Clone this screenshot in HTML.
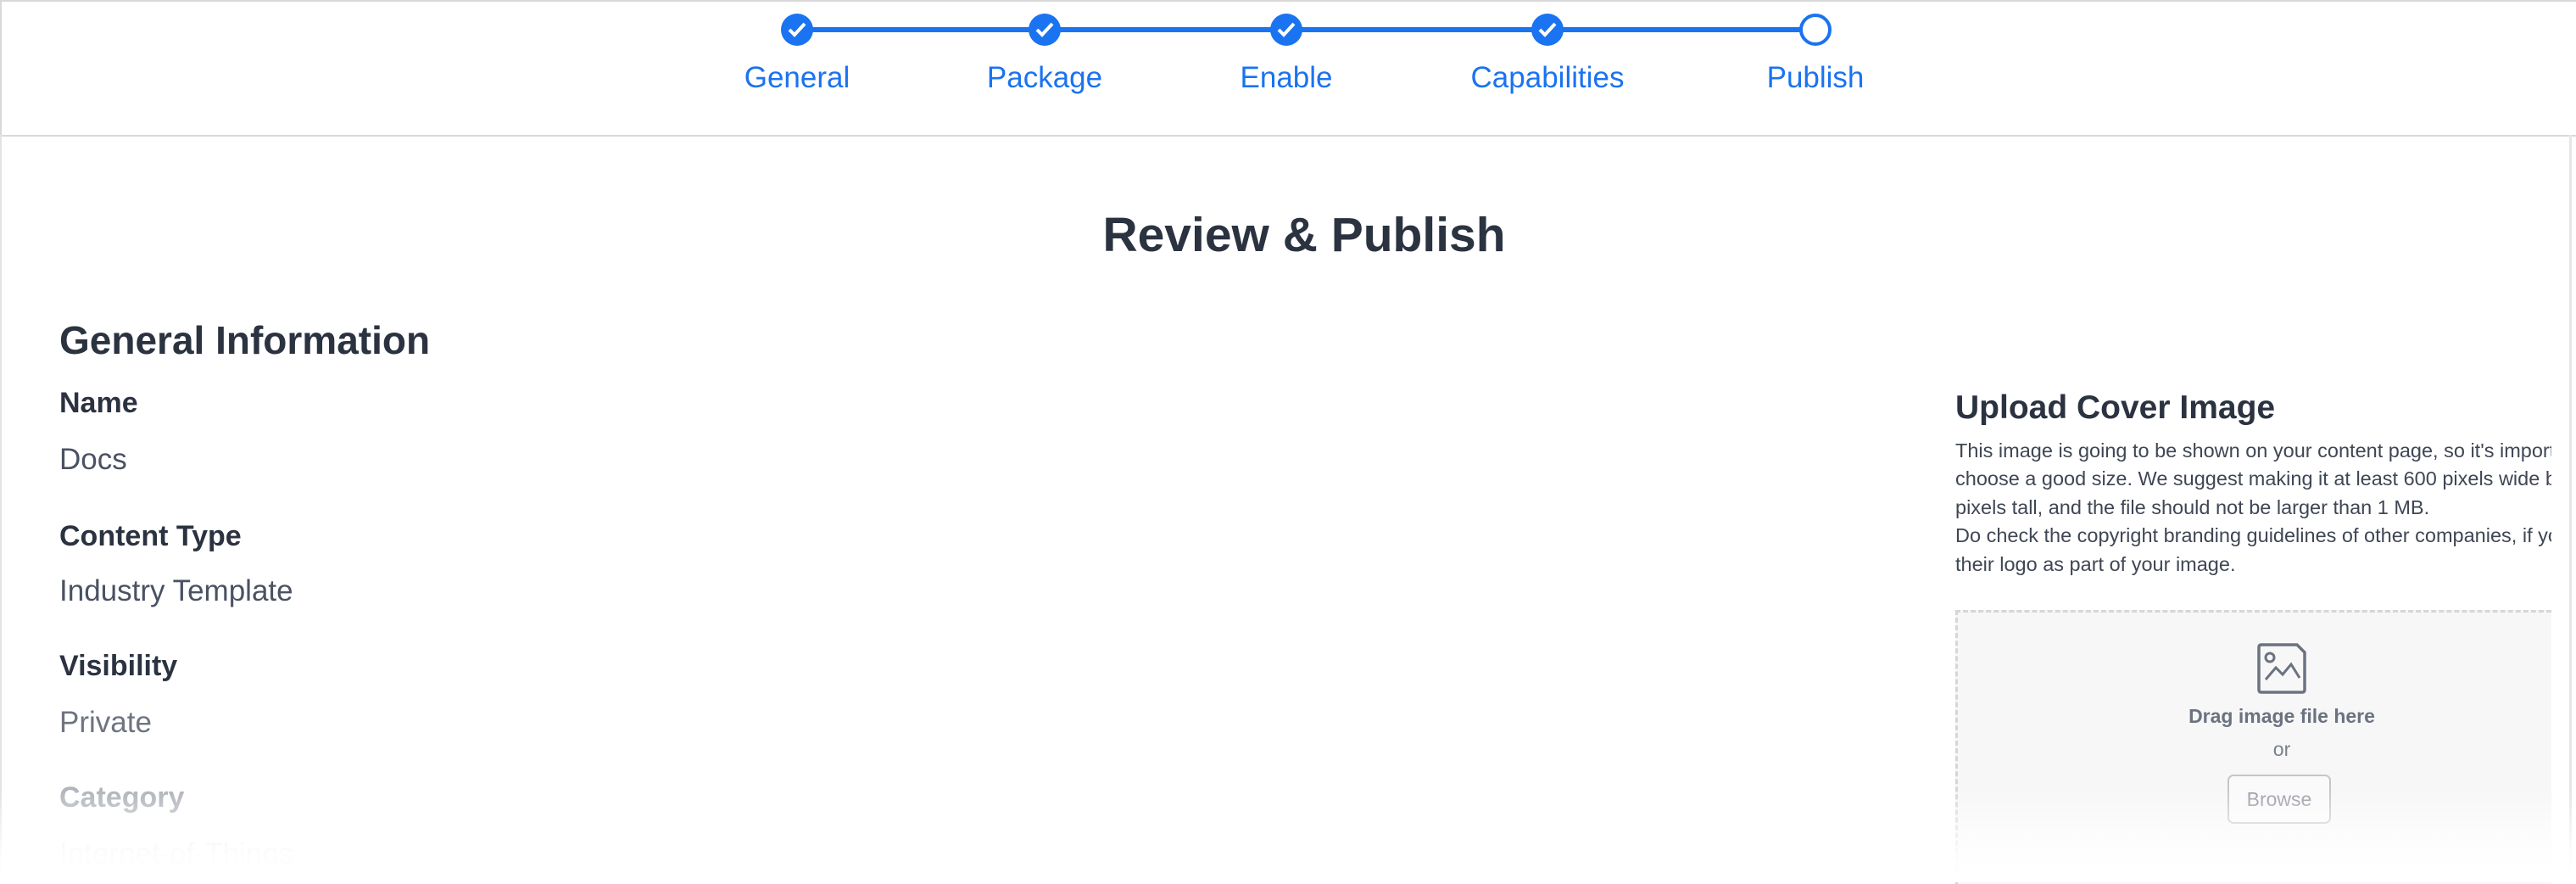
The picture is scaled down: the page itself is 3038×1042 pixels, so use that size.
<!DOCTYPE html>
<html><head><meta charset="utf-8"><style>
html,body{margin:0;padding:0;background:#fff;}
body{width:3038px;height:1034px;position:relative;overflow:hidden;font-family:"Liberation Sans","DejaVu Sans",sans-serif;}
.hdr{position:absolute;left:0;top:0;width:3036px;height:157px;border:2px solid #d9d9d9;border-right:none;}
.leftb{position:absolute;left:0;top:159px;width:2px;height:875px;background:#e3e3e3;}
.rightb{position:absolute;left:3030px;top:159px;width:3px;height:875px;background:#e6e6e6;}
.line{position:absolute;top:32px;height:6px;background:#1a73f0;left:940px;width:1200px;}
.c{position:absolute;top:16px;width:38px;height:38px;border-radius:50%;background:#1a73f0;margin-left:-19px;}
.c svg{position:absolute;left:7px;top:8px;}
.c.o{background:#fff;border:4px solid #1a73f0;box-sizing:border-box;}
.lab{position:absolute;top:72px;font-size:35px;color:#1a73f0;transform:translateX(-50%);white-space:nowrap;}
h1{position:absolute;left:0;width:3076px;text-align:center;top:244px;margin:0;font-size:57px;font-weight:bold;color:#2b3240;}
.t{position:absolute;left:70px;margin:0;white-space:nowrap;}
.h2{font-size:46px;font-weight:bold;color:#2b3240;}
.k{font-size:34px;font-weight:bold;color:#2b3240;}
.v{font-size:35px;color:#4a5263;}
.r{position:absolute;left:2306px;white-space:nowrap;}
.p{position:absolute;left:2306px;width:703px;overflow:hidden;white-space:nowrap;font-size:23.5px;color:#3f4654;}
.box{position:absolute;left:2306px;top:719px;width:700px;height:320px;border:3px dashed #d6d6d6;border-right:none;border-bottom:none;background:#f7f7f8;}
.fade{position:absolute;left:0;top:930px;width:3038px;height:110px;background:linear-gradient(rgba(255,255,255,0),rgba(255,255,255,0.9) 70%,#fff);}
.btn{position:absolute;left:2627px;top:913px;width:122px;height:58px;border:2px solid #c4c6ca;border-radius:7px;box-sizing:border-box;font-size:23px;color:#9a9ea6;text-align:center;line-height:54px;background:#fafafa;}
</style></head><body>
<div class="hdr"></div><div class="leftb"></div><div class="rightb"></div>
<div class="line"></div>
<div class="c" style="left:940px"><svg width="24" height="22" viewBox="0 0 24 22"><path d="M3 11 L9 17 L21 4" stroke="#fff" stroke-width="4" fill="none"/></svg></div>
<div class="c" style="left:1232px"><svg width="24" height="22" viewBox="0 0 24 22"><path d="M3 11 L9 17 L21 4" stroke="#fff" stroke-width="4" fill="none"/></svg></div>
<div class="c" style="left:1517px"><svg width="24" height="22" viewBox="0 0 24 22"><path d="M3 11 L9 17 L21 4" stroke="#fff" stroke-width="4" fill="none"/></svg></div>
<div class="c" style="left:1825px"><svg width="24" height="22" viewBox="0 0 24 22"><path d="M3 11 L9 17 L21 4" stroke="#fff" stroke-width="4" fill="none"/></svg></div>
<div class="c o" style="left:2141px"></div>
<div class="lab" style="left:940px">General</div>
<div class="lab" style="left:1232px">Package</div>
<div class="lab" style="left:1517px">Enable</div>
<div class="lab" style="left:1825px">Capabilities</div>
<div class="lab" style="left:2141px">Publish</div>
<h1>Review &amp; Publish</h1>
<div class="t h2" style="top:374px">General Information</div>
<div class="t k" style="top:456px">Name</div>
<div class="t v" style="top:522px">Docs</div>
<div class="t k" style="top:613px">Content Type</div>
<div class="t v" style="top:677px">Industry Template</div>
<div class="t k" style="top:766px">Visibility</div>
<div class="t v" style="top:832px;color:#6e7480">Private</div>
<div class="t k" style="top:921px;color:#b0b4bb">Category</div>
<div class="t v" style="top:987px;color:#e6e7ea">Internet-of-Things</div>
<div class="r" style="top:459px;font-size:39px;font-weight:bold;color:#2b3240">Upload Cover Image</div>
<div class="p" style="top:518px">This image is going to be shown on your content page, so it's important to</div>
<div class="p" style="top:551px">choose a good size. We suggest making it at least 600 pixels wide by 300</div>
<div class="p" style="top:585px">pixels tall, and the file should not be larger than 1 MB.</div>
<div class="p" style="top:618px">Do check the copyright branding guidelines of other companies, if you use</div>
<div class="p" style="top:652px">their logo as part of your image.</div>
<div class="box"></div>
<svg style="position:absolute;left:2660px;top:757px" width="62" height="62" viewBox="0 0 62 62"><path d="M4 6 Q4 3 7 3 L49 3 L58 12 L58 56 Q58 59 55 59 L7 59 Q4 59 4 56 Z" fill="none" stroke="#6b7280" stroke-width="3.5"/><circle cx="17" cy="18" r="5" fill="none" stroke="#6b7280" stroke-width="3"/><path d="M12 44 L24 30 L32 38 L42 26 L52 42" fill="none" stroke="#6b7280" stroke-width="3"/></svg>
<div class="r" style="left:2691px;transform:translateX(-50%);top:831px;font-size:23px;font-weight:bold;color:#6b7280">Drag image file here</div>
<div class="r" style="left:2691px;transform:translateX(-50%);top:870px;font-size:23px;color:#7a7f88">or</div>
<div class="btn">Browse</div>
<div class="fade"></div>
</body></html>
